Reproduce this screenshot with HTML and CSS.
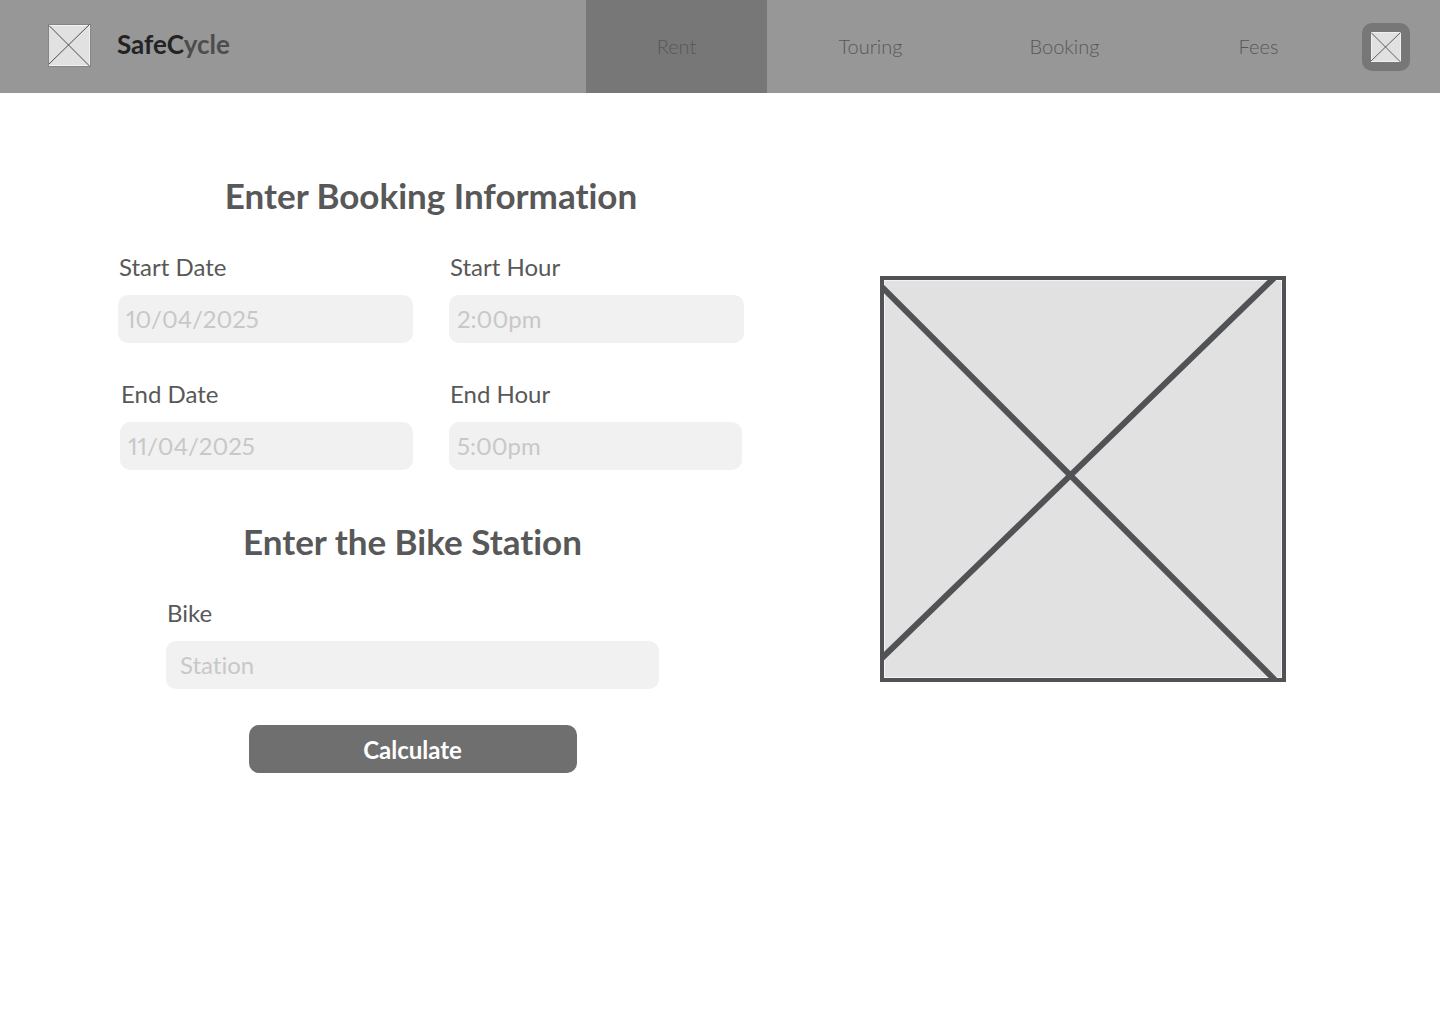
FILE: index.html
```html
<!DOCTYPE html>
<html lang="en">
<head>
<meta charset="utf-8">
<meta name="viewport" content="width=device-width, initial-scale=1">
<title>SafeCycle – Rent</title>
<link rel="stylesheet" href="styles.css">
</head>
<body>
<header class="header">
  <a class="brand" href="#">
    <svg class="brand-mark" viewBox="0 0 43 43" aria-hidden="true">
      <rect width="43" height="43" fill="#858585"/>
      <rect x="1" y="1" width="41" height="41" fill="#f2f2f2"/>
      <rect x="1" y="2" width="40" height="39" fill="#e1e1e1"/>
      <path d="M1 1.500L41.500 42M1 40L41.500 .5" stroke="#4d4e52" fill="none"/>
    </svg>
    <span class="brand-name">SafeC<span class="brand-tail">ycle</span></span>
  </a>
  <nav class="nav">
    <a class="nav-link nav-link-active" href="#" aria-current="page">Rent</a>
    <a class="nav-link" href="#">Touring</a>
    <a class="nav-link" href="#">Booking</a>
    <a class="nav-link" href="#">Fees</a>
    <button class="account" type="button" aria-label="Account">
      <svg class="account-icon" viewBox="0 0 30 30" aria-hidden="true">
        <rect width="30" height="30" fill="#f0f0f0"/>
        <rect x="1" y="1" width="28" height="28" fill="#e1e1e1"/>
        <path d="M0 0.500L29.500 30M0 29L29.500 .5" stroke="#4d4e52" stroke-width=".9" fill="none"/>
      </svg>
    </button>
  </nav>
</header>
<main class="main">
  <form class="form">
    <section class="section">
      <h2 class="title">Enter Booking Information</h2>
      <div class="rows">
        <div class="row">
          <div class="field">
            <label class="label" for="start-date">Start Date</label>
            <input class="input" id="start-date" type="text" placeholder="10/04/2025">
          </div>
          <div class="field">
            <label class="label" for="start-hour">Start Hour</label>
            <input class="input" id="start-hour" type="text" placeholder="2:00pm">
          </div>
        </div>
        <div class="row row-inset">
          <div class="field">
            <label class="label" for="end-date">End Date</label>
            <input class="input" id="end-date" type="text" placeholder="11/04/2025">
          </div>
          <div class="field">
            <label class="label" for="end-hour">End Hour</label>
            <input class="input" id="end-hour" type="text" placeholder="5:00pm">
          </div>
        </div>
      </div>
    </section>
    <section class="section section-station">
      <h2 class="title">Enter the Bike Station</h2>
      <div class="station">
        <div class="field">
          <label class="label" for="bike">Bike</label>
          <input class="input input-wide" id="bike" type="text" placeholder="Station">
        </div>
        <button class="submit" type="submit">Calculate</button>
      </div>
    </section>
  </form>
  <svg class="picture" viewBox="0 0 406 406" role="img" aria-label="Picture placeholder">
    <rect width="406" height="406" fill="#505256"/>
    <rect x="4" y="4" width="398" height="398" fill="#f4f4f4"/>
    <rect x="5" y="5" width="396" height="396" fill="#e1e1e1"/>
    <path d="M2 11L395 404M2 382L395 1" stroke="#505256" stroke-width="6" fill="none"/>
  </svg>
</main>
</body>
</html>
```
FILE: styles.css
```css
* {
  box-sizing: border-box;
}

body {
  margin: 0;
  background: #fff;
  color: #585858;
  font-family: Lato, "Liberation Sans", sans-serif;
  font-variant-ligatures: none;
}

.header {
  display: flex;
  align-items: stretch;
  justify-content: space-between;
  min-height: 93px;
  padding: 0 30px 0 48px;
  background: #979797;
}

.brand {
  display: flex;
  align-items: center;
  gap: 26px;
  padding-bottom: 2px;
  color: #232323;
  text-decoration: none;
}

.brand-mark {
  width: 43px;
  height: 43px;
}

.brand-name {
  padding-bottom: 4px;
  font-size: 26px;
  font-weight: 700;
  line-height: 32px;
}

.brand-tail {
  color: #4d4d4d;
}

.nav {
  display: flex;
  align-items: center;
  gap: 13px;
}

.nav-link {
  display: flex;
  align-self: stretch;
  align-items: center;
  justify-content: center;
  width: 181px;
  padding-bottom: 2px;
  color: #585858;
  font-size: 20px;
  font-weight: 300;
  text-decoration: none;
}

.nav-link-active {
  background: #777;
}

.account {
  display: flex;
  align-items: center;
  justify-content: center;
  width: 48px;
  height: 48px;
  padding: 0;
  border: 0;
  border-radius: 10px;
  background: #777;
}

.account-icon {
  width: 30px;
  height: 30px;
}

.main {
  display: grid;
  grid-template-columns: 626fr 406fr;
  gap: 136px;
  align-items: start;
  padding: 81px 154px 81px 118px;
}

.form {
  display: flex;
  flex-direction: column;
  gap: 50px;
}

.section {
  display: flex;
  flex-direction: column;
  gap: 37px;
}

.section-station {
  padding-right: 37px;
}

.title {
  margin: 0;
  font-size: 35px;
  font-weight: 700;
  line-height: 42px;
  text-align: center;
}

.rows {
  display: flex;
  flex-direction: column;
  gap: 37px;
}

.row {
  display: flex;
  gap: 36px;
}

.row-inset {
  padding: 0 2px;
}

.field {
  display: flex;
  flex: 1;
  flex-direction: column;
  gap: 14px;
  min-width: 0;
}

.label {
  padding-left: 1px;
  font-size: 24px;
  line-height: 28px;
}

.input {
  width: 100%;
  height: 48px;
  padding: 0 8px 2px;
  border: 0;
  border-radius: 10px;
  background: #f1f1f1;
  color: #585858;
  font-family: inherit;
  font-size: 24px;
  font-variant-ligatures: none;
  font-variant-numeric: proportional-nums;
}

.input-wide {
  padding: 0 14px 2px;
}

.input::placeholder {
  color: #c8c8c8;
  opacity: 1;
}

.station {
  display: flex;
  flex-direction: column;
  gap: 36px;
  padding: 0 48px;
}

.submit {
  align-self: center;
  width: 328px;
  height: 48px;
  border: 0;
  border-radius: 10px;
  background: #6f6f6f;
  color: #fff;
  font-family: inherit;
  font-size: 24px;
  font-weight: 700;
}

.picture {
  width: 100%;
  margin-top: 102px;
}
```
